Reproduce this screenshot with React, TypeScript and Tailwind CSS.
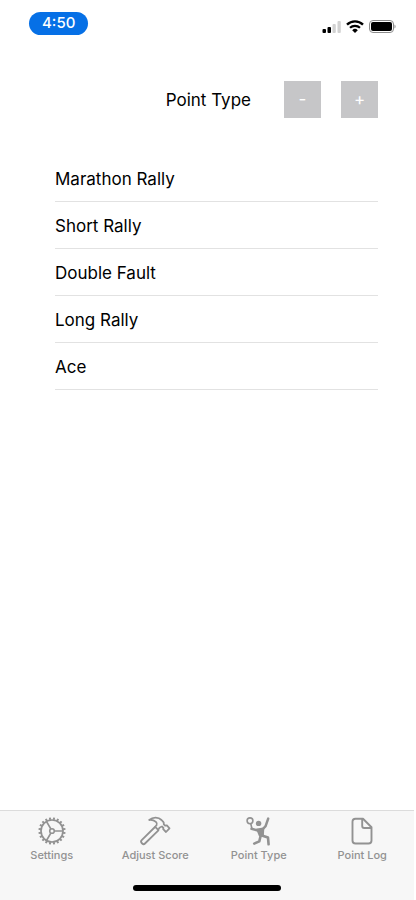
import { useState } from 'react'
import type { ReactNode } from 'react'

const pointTypes = ['Marathon Rally', 'Short Rally', 'Double Fault', 'Long Rally', 'Ace']

const teeth = Array.from({ length: 20 }, (_, i) => i * 18)

function GearIcon() {
  return (
    <svg className="w-8 h-8" viewBox="0 0 32 32" fill="none" stroke="currentColor" aria-hidden="true">
      <circle cx="16" cy="16" r="11" strokeWidth="1.7" />
      {teeth.map((angle) => (
        <path key={angle} d="M16 4.8V2.4" strokeWidth="2" transform={`rotate(${angle + 9} 16 16)`} />
      ))}
      <circle cx="16" cy="16" r="2.3" strokeWidth="1.6" />
      <path d="M18.3 16H27M14.9 14 10.5 6.5M14.9 18 10.5 25.5" strokeWidth="1.6" />
    </svg>
  )
}

function HammerIcon() {
  return (
    <svg
      className="w-8 h-8"
      viewBox="0 0 32 32"
      fill="none"
      stroke="currentColor"
      strokeWidth="1.8"
      strokeLinejoin="round"
      strokeLinecap="round"
      aria-hidden="true"
    >
      <path d="M16 12 2.7 25.2a2 2 0 0 0 0 2.8l.5.5a2 2 0 0 0 2.8 0L19.4 15.3" />
      <path d="M10.2 5C14 1.8 19.5 2 22.5 5l1.8 1.9c.7.8.6 1.5.5 2.5l1.5 1.3 1.6-.3 2.6 2.9-3.5 3.7-2.8-2.8.2-1.3-1.5-1.4c-1.2.3-1.7.5-2.5 1.4l-1.2 2-3-3.1 1.4-1.7c.7-1.1.3-2.2-.7-3.2-1.7-1.5-3.9-2.2-6.7-1.9z" />
    </svg>
  )
}

function PlayerIcon() {
  return (
    <svg
      className="w-8 h-8"
      viewBox="0 0 32 32"
      fill="none"
      stroke="currentColor"
      strokeLinecap="round"
      strokeLinejoin="round"
      aria-hidden="true"
    >
      <circle cx="7" cy="5.8" r="2.9" strokeWidth="1.6" />
      <path d="M7.8 8.8 9 14" strokeWidth="1.6" />
      <circle cx="15.6" cy="8.4" r="2.7" fill="currentColor" stroke="none" />
      <path d="M8.5 13.8 14 15.3" strokeWidth="2.5" />
      <path d="M25.2 3.6 22.6 11.2 19 15" strokeWidth="2.5" />
      <path d="M14 14.3 20.5 13.4 20 21 16.6 20.8z" fill="currentColor" strokeWidth="1.6" />
      <path d="M18.8 20.4 25 22.6 25.6 29.3" strokeWidth="2.6" />
      <path d="M17.6 21 16.3 26.4 11.2 28.6" strokeWidth="2.6" />
    </svg>
  )
}

function DocumentIcon() {
  return (
    <svg
      className="w-8 h-8"
      viewBox="0 0 32 32"
      fill="none"
      stroke="currentColor"
      strokeWidth="1.9"
      strokeLinejoin="round"
      aria-hidden="true"
    >
      <path d="M9.5 3.8H17L25.5 12.2V25.5a3 3 0 0 1-3 3H9.5a3 3 0 0 1-3-3V6.8a3 3 0 0 1 3-3z" />
      <path d="M16.2 4V11a2 2 0 0 0 2 2H25.5" />
    </svg>
  )
}

const tabs: { label: string; icon: ReactNode }[] = [
  { label: 'Settings', icon: <GearIcon /> },
  { label: 'Adjust Score', icon: <HammerIcon /> },
  { label: 'Point Type', icon: <PlayerIcon /> },
  { label: 'Point Log', icon: <DocumentIcon /> },
]

function StatusBar() {
  return (
    <header className="flex items-start justify-between pt-3 pl-[29px] pr-[17px]">
      <div className="rounded-full bg-[#0670e6] px-[13px] h-[23px] flex items-center text-[15px] font-medium text-white">
        4:50
      </div>
      <div className="flex items-center gap-1 pt-2">
        <svg className="w-5 h-3" viewBox="0 0 20 12" aria-hidden="true">
          <rect x="0.5" y="8" width="3.5" height="4" rx="1" fill="#000" />
          <rect x="5.5" y="6" width="3.5" height="6" rx="1" fill="#000" />
          <rect x="10.5" y="3" width="3.3" height="9" rx="1" fill="#d2d2d2" />
          <rect x="15.5" y="0" width="3.3" height="12" rx="1" fill="#d2d2d2" />
        </svg>
        <svg className="w-[18px] h-[13px]" viewBox="0 0 18 13" fill="none" stroke="#000" aria-hidden="true">
          <path d="M1 4.6a11.5 11.5 0 0 1 16 0" strokeWidth="2.4" />
          <path d="M4 7.8a7.3 7.3 0 0 1 10 0" strokeWidth="2.2" />
          <path d="M9 13 6.2 10.2a4 4 0 0 1 5.6 0z" fill="#000" stroke="none" />
        </svg>
        <svg className="w-7 h-[13px] ml-px" viewBox="0 0 28 13" aria-hidden="true">
          <rect x="0.5" y="0.5" width="24" height="12" rx="3.5" fill="none" stroke="#8c8c8c" />
          <rect x="2" y="2" width="21" height="9" rx="2" fill="#000" />
          <path d="M25.5 4.5c1.4.5 1.4 3.500 0 4z" fill="#8c8c8c" />
        </svg>
      </div>
    </header>
  )
}

export default function App() {
  const [items, setItems] = useState(pointTypes)
  const [activeTab, setActiveTab] = useState('Point Type')

  return (
    <div className="min-h-screen bg-white pr-[2px] flex flex-col font-[Inter,sans-serif] text-black">
      <StatusBar />

      <main className="flex-1 pl-[55px] pr-9 pt-[46px]">
        <div className="flex items-center justify-end gap-5">
          <h1 className="text-[17px] leading-6 mr-[13px]">Point Type</h1>
          <button
            type="button"
            aria-label="Remove point type"
            onClick={() => setItems(items.slice(0, -1))}
            className="size-[37px] bg-[#c6c6c8] text-white text-[17px]"
          >
            -
          </button>
          <button
            type="button"
            aria-label="Add point type"
            onClick={() => setItems([...items, 'New Point'])}
            className="size-[37px] bg-[#c6c6c8] text-white text-[17px]"
          >
            +
          </button>
        </div>

        <ul className="mt-[37px]">
          {items.map((item, index) => (
            <li key={index} className="h-[47px] pt-[3px] flex items-center border-b border-[#e2e2e2] text-[17px]">
              {item}
            </li>
          ))}
        </ul>
      </main>

      <footer className="bg-[#f7f7f7] border-t border-[#dcdcdc] pt-1 pb-[9px]">
        <nav className="grid grid-cols-4">
          {tabs.map((tab) => (
            <button
              key={tab.label}
              type="button"
              aria-current={activeTab === tab.label ? 'page' : undefined}
              onClick={() => setActiveTab(tab.label)}
              className="flex flex-col items-center text-[#929292]"
            >
              {tab.icon}
              <span className="text-[11px] leading-4 font-medium whitespace-nowrap">{tab.label}</span>
            </button>
          ))}
        </nav>
        <div className="mx-auto mt-[22px] h-[6px] w-[148px] rounded-full bg-black" />
      </footer>
    </div>
  )
}
